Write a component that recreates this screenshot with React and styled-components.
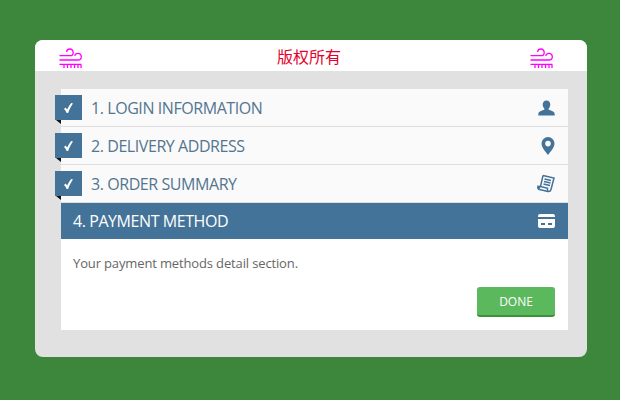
import React from "react";
import styled, { createGlobalStyle } from "styled-components";

const GlobalStyle = createGlobalStyle`
  html, body {
    margin: 0;
    padding: 0;
    background: #3d873c;
  }
  body {
    font-family: "Open Sans", "Noto Sans", sans-serif;
  }
`;

const Page = styled.div`
  width: 620px;
  height: 400px;
  box-sizing: border-box;
  padding: 40px 33px 43px 35px;
`;

const Panel = styled.div`
  height: 317px;
  display: flex;
  flex-direction: column;
  border-radius: 8px;
  overflow: hidden;
  background: #e1e1e1;
`;

const Header = styled.div`
  height: 31px;
  flex: none;
  display: flex;
  align-items: center;
  justify-content: space-between;
  padding: 0 34px 0 24px;
  background: #fff;
`;

const Brand = styled.div`
  color: #e4002b;
  font-family: "Noto Sans CJK SC", sans-serif;
  font-size: 16px;
  line-height: 31px;
  margin: 2px 0 0 6px;
`;

const WindIcon = styled.svg`
  margin-top: 5px;
  overflow: visible;
`;

const Body = styled.div`
  padding: 18px 19px 27px 26px;
`;

const Accordion = styled.div`
  display: flex;
  flex-direction: column;
  background: #fff;
`;

const Row = styled.div`
  position: relative;
  height: 37px;
  display: flex;
  align-items: center;
  justify-content: space-between;
  box-sizing: border-box;
  padding: 0 13px 0 30px;
  margin-bottom: 1px;
  background: #fafafa;
  color: #527590;
  font-size: 16px;
  letter-spacing: -0.43px;
  box-shadow: 0 1px 0 #dedede;
`;

const ActiveRow = styled(Row)`
  height: 36px;
  padding-left: 12px;
  margin-bottom: 0;
  background: #447399;
  color: #fff;
  box-shadow: none;
`;

const Badge = styled.div`
  position: absolute;
  left: -6px;
  top: 6px;
  width: 27px;
  height: 25px;
  display: flex;
  align-items: center;
  justify-content: center;
  background: #447399;

  &::after {
    content: "";
    position: absolute;
    left: 1px;
    top: 100%;
    border-style: solid;
    border-width: 0 5px 4px 0;
    border-color: transparent #111 transparent transparent;
  }
`;

const Content = styled.div`
  height: 91px;
  box-sizing: border-box;
  position: relative;
  padding: 14px 12px 0;
  color: #666;
  font-size: 13px;
  letter-spacing: -0.14px;
  line-height: 20px;
  background: #fff;
`;

const DoneButton = styled.button`
  position: absolute;
  right: 13px;
  bottom: 13px;
  width: 78px;
  height: 30px;
  padding: 0;
  border: 0;
  border-bottom: 2px solid #3b933b;
  border-radius: 3px;
  background: #5cb85c;
  color: #fff;
  font-family: inherit;
  font-size: 12px;
`;

const Wind = () => (
  <WindIcon width="23" height="22" viewBox="0 0 23 22" fill="none" stroke="#f0f" strokeWidth="1.3">
    <path d="M.5 8.700h10.500c2 0 3.200-1.400 3.200-3.300 0-2-1.400-3.400-3.300-3.400-1.800 0-3.100 1.100-3.400 2.800" />
    <path d="M.5 13h18.300c2.200 0 3.500-1.400 3.500-3.300 0-1.900-1.500-3.400-3.300-3.400-1.700 0-3 1-3.300 2.500" />
    <path d="M.5 17.300h22" />
    <path d="M5 18v3M8.500 18v3M12 18v3M15.500 18v3M19 18v3M22 18v3" />
  </WindIcon>
);

const Tick = () => (
  <svg width="9" height="10" viewBox="0 0 10 11" fill="#fff">
    <path d="M0 6.500l1.800-1.500 1.700 2.200C4.800 4.400 6.300 2 8 0l2 .6C8 3.500 6 7 4.600 11H3C2.300 9.300 1.200 7.700 0 6.500z" />
  </svg>
);

const UserIcon = () => (
  <svg width="17" height="16" viewBox="0 0 18 16" fill="#447399">
    <path d="M9 0c2.600 0 4 1.800 4 4.200 0 1.800-.7 3.300-1.700 4.300v1.400c2.200.8 5.700 1.500 6.200 3.600.2.800.2 1.500.2 2.500H.3c0-1 0-1.700.2-2.500.5-2.100 4-2.800 6.200-3.600V8.500C5.700 7.500 5 6 5 4.200 5 1.800 6.400 0 9 0z" />
  </svg>
);

const PinIcon = () => (
  <svg width="14" height="18" viewBox="0 0 14 18">
    <path
      fillRule="evenodd"
      fill="#447399"
      d="M7 0a6.500 6.500 0 0 1 6.500 6.500C13.500 10.500 9.500 14.500 7 18 4.500 14.500.5 10.500.5 6.500A6.500 6.500 0 0 1 7 0zm0 3.800a2.800 2.800 0 1 0 0 5.600 2.800 2.800 0 0 0 0-5.600z"
    />
  </svg>
);

const ReceiptIcon = () => (
  <svg width="18" height="19" viewBox="0 0 18 19" fill="none" stroke="#447399" strokeWidth="1.5">
    <path d="M6 1.500l11 2.500-3 11.500c-.4 1.500-1.500 2.300-3 2l-8.500-2" />
    <path d="M6 1.500L3.500 12.500l7 1.700c-.4 1.500 0 2.600.7 3.300" />
    <path d="M3.500 12.500L1 12.200c-.6 1.800.2 3.200 1.500 3.600" fill="#447399" />
    <path d="M7.500 5l6.500 1.500M7 7.500l6.500 1.500M6.500 10l6.500 1.500" />
  </svg>
);

const CardIcon = () => (
  <svg width="17" height="14" viewBox="0 0 17 14">
    <path
      fillRule="evenodd"
      fill="#fff"
      d="M2 0h13a2 2 0 0 1 2 2v1H0V2a2 2 0 0 1 2-2zM0 5h17v7a2 2 0 0 1-2 2H2a2 2 0 0 1-2-2V5zm3 4v2h4V9H3zm7 0v2h4V9h-4z"
    />
  </svg>
);

const steps = [
  { title: "1. LOGIN INFORMATION", icon: <UserIcon /> },
  { title: "2. DELIVERY ADDRESS", icon: <PinIcon /> },
  { title: "3. ORDER SUMMARY", icon: <ReceiptIcon /> },
];

const App = () => (
  <Page>
    <GlobalStyle />
    <Panel>
      <Header>
        <Wind />
        <Brand>版权所有</Brand>
        <Wind />
      </Header>
      <Body>
        <Accordion>
          {steps.map((step) => (
            <Row key={step.title}>
              <Badge>
                <Tick />
              </Badge>
              <span>{step.title}</span>
              {step.icon}
            </Row>
          ))}
          <ActiveRow>
            <span>4. PAYMENT METHOD</span>
            <CardIcon />
          </ActiveRow>
          <Content>
            Your payment methods detail section.
            <DoneButton>DONE</DoneButton>
          </Content>
        </Accordion>
      </Body>
    </Panel>
  </Page>
);

export default App;
